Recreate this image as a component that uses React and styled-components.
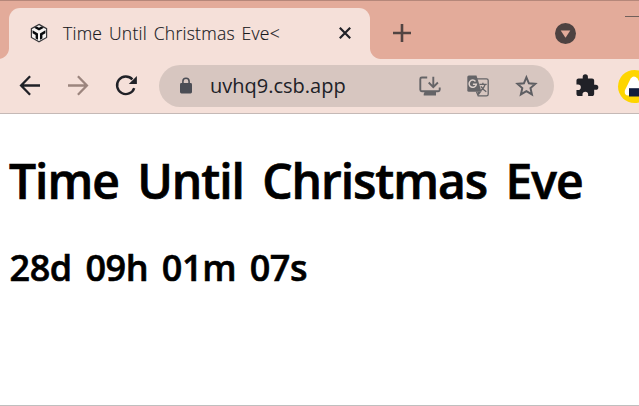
import React from 'react';
import styled, { createGlobalStyle } from 'styled-components';

const GlobalStyle = createGlobalStyle`
  *, *::before, *::after { box-sizing: border-box; }
  body { margin: 0; overflow: hidden; background: #fff; }
  svg { display: block; flex: none; overflow: visible; }
`;

const Window = styled.div`
  display: flex;
  flex-direction: column;
  width: 639px;
  height: 406px;
  overflow: hidden;
  background: #fff;
  border-bottom: 1px solid #bfbfbf;
  font-family: 'Open Sans', 'Noto Sans', 'Noto Sans CJK KR', sans-serif;
`;

const TabStrip = styled.header`
  display: flex;
  align-items: flex-end;
  height: 59px;
  flex: none;
  padding-left: 9px;
  background: #e3ab9a;
  border-top: 1px solid #b5877a;
`;

const Tab = styled.div`
  position: relative;
  display: flex;
  flex: none;
  align-items: center;
  width: 361px;
  height: 51px;
  padding: 0 19px 1px 18px;
  border-radius: 11px 11px 0 0;
  background: #f5e0d9;

  &::before, &::after {
    content: '';
    position: absolute;
    bottom: 0;
    width: 11px;
    height: 11px;
  }
  &::before {
    right: 100%;
    background: radial-gradient(circle at 0 0, transparent 10.5px, #f5e0d9 11.5px);
  }
  &::after {
    left: 100%;
    background: radial-gradient(circle at 100% 0, transparent 10.5px, #f5e0d9 11.5px);
  }
`;

const TabTitle = styled.span`
  flex: 1;
  margin-left: 12px;
  color: #17181c;
  font-size: 17.5px;
  font-weight: 300;
  line-height: 24px;
  white-space: nowrap;
  letter-spacing: 0.25px;
  word-spacing: 2px;
  -webkit-text-stroke: 0.15px #17181c;
`;

const StripControls = styled.div`
  display: flex;
  flex: 1;
  align-items: center;
  height: 51px;
  padding: 0 0 1px 22px;
`;

const TabSearch = styled.div`
  display: flex;
  margin-left: 143px;
`;

const Minimise = styled.div`
  align-self: flex-start;
  flex: none;
  width: 15px;
  height: 1px;
  margin: 8px 0 0 49px;
  background: #71605b;
`;

const Toolbar = styled.nav`
  display: flex;
  align-items: center;
  flex: none;
  height: 55px;
  padding-left: 18px;
  background: #f5e0d9;
  border-bottom: 1px solid #c5b9b6;
`;

const Navigation = styled.div`
  display: flex;
  gap: 24px;
  width: 141px;
  flex: none;
`;

const AddressBar = styled.div`
  display: flex;
  align-items: center;
  flex: none;
  width: 395px;
  height: 42px;
  padding: 0 16px 0 20px;
  border-radius: 21px;
  background: #d7c6c0;
`;

const Address = styled.span`
  flex: 1;
  margin-left: 17px;
  color: #202127;
  font-size: 20px;
  line-height: 28px;
  letter-spacing: 0;
  white-space: nowrap;
`;

const AddressActions = styled.div`
  display: flex;
  gap: 24px;
`;

const Extensions = styled.div`
  display: flex;
  align-items: center;
  flex: none;
  gap: 18px;
  margin-left: 21px;
`;

const Page = styled.main`
  padding: 0 9px;
  color: #000;
`;

const Title = styled.h1`
  margin: 34px 0 0;
  font-size: 48px;
  font-weight: 600;
  line-height: 66px;
  letter-spacing: -1.05px;
  word-spacing: 7px;
  white-space: nowrap;
  -webkit-text-stroke: 0.7px #000;
`;

const Countdown = styled.h2`
  margin: 29px 0 0 0.5px;
  font-size: 36px;
  font-weight: 600;
  line-height: 50px;
  letter-spacing: -0.4px;
  word-spacing: 4.6px;
  white-space: nowrap;
  -webkit-text-stroke: 0.6px #000;
`;

const CubeIcon = () => (
  <svg width="24" height="24" viewBox="0 0 24 24">
    <path d="M12 3.4 19.6 7.6V16.4L12 20.7 4.4 16.4V7.6Z" fill="#f6f3f1" stroke="#38373a" strokeWidth="1.2" />
    <path d="M7.1 6.7 9.8 5.4 12 6.7 14.2 5.4 16.9 6.7 12 9.6Z" fill="#080a0c" />
    <path d="M5.6 9.3 11 12.5V18.8L8.6 17.5V14L5.6 12.2ZM18.4 9.3 13 12.5V18.8L15.4 17.5V14L18.4 12.2Z" fill="#080a0c" />
  </svg>
);

const CloseIcon = () => (
  <svg width="12" height="12" viewBox="0 0 12 12">
    <path d="M.8.8 11.2 11.2M11.2.8.8 11.2" stroke="#202127" strokeWidth="2.2" />
  </svg>
);

const PlusIcon = () => (
  <svg width="20" height="20" viewBox="0 0 20 20">
    <path d="M10 1V19M1 10H19" stroke="#514442" strokeWidth="2.6" />
  </svg>
);

const TabSearchIcon = () => (
  <svg width="21" height="21" viewBox="0 0 21 21">
    <circle cx="10.5" cy="10.5" r="10.5" fill="#4e4241" />
    <path d="M5.7 7.6H15.3L10.5 14.7Z" fill="#e3ab9a" />
  </svg>
);

const ArrowIcon = ({ flip, color }) => (
  <svg width="24" height="24" viewBox="0 0 24 24">
    <g transform={flip ? 'translate(24 0) scale(-1 1)' : undefined} fill="none" stroke={color} strokeWidth="2.3">
      <path d="M22 11.5H3.5M12.1 2.3 3.1 11.5 12.1 20.7" />
    </g>
  </svg>
);

const ReloadIcon = () => (
  <svg width="24" height="24" viewBox="0 0 24 24">
    <path d="M18.4 5.4A8.8 8.8 0 1 0 20.2 14.1" fill="none" stroke="#202127" strokeWidth="2.4" />
    <path d="M22.9 2V10H14.8Z" fill="#202127" />
  </svg>
);

const LockIcon = () => (
  <svg width="14" height="18" viewBox="0 0 14 18">
    <rect x="1" y="6" width="12" height="10.5" rx="1.4" fill="#4b4d55" />
    <path d="M3.9 6.5V4.3A3.1 3.1 0 0 1 10.1 4.3V6.5" fill="none" stroke="#4b4d55" strokeWidth="1.6" />
  </svg>
);

const InstallIcon = () => (
  <svg width="24" height="24" viewBox="0 0 24 24">
    <path d="M9.2 3.5H3.8Q2.3 3.5 2.3 5V15.8Q2.3 17.3 3.8 17.3H20.2Q21.7 17.3 21.7 15.8V13.4" fill="none" stroke="#656467" strokeWidth="1.9" />
    <path d="M6.7 17.4H18V21.4H5.7V19.9Z" fill="#656467" />
    <path d="M15.3 2.8V12.7M10.7 8.5 15.3 13.1 19.9 8.5" fill="none" stroke="#656467" strokeWidth="1.9" />
  </svg>
);

const TranslateIcon = () => (
  <svg width="24" height="24" viewBox="0 0 24 24">
    <path d="M11 4.8H20.4Q22.2 4.8 22.2 6.5V20.3Q22.2 21.9 20.4 21.9H12.2L10.5 17.8" fill="none" stroke="#656467" strokeWidth="1.3" />
    <path d="M2.8 1.4H10.5L15.5 17.7H2.8Q1.3 17.7 1.3 16.2V2.9Q1.3 1.4 2.8 1.4Z" fill="#656467" />
    <path d="M11.5 17.7H15.3L12.4 21.6Z" fill="#656467" />
    <path d="M9.5 7.4A3.6 3.6 0 1 0 10.3 10.3H6.9" fill="none" stroke="#ddd0cb" strokeWidth="1.5" />
    <path d="M13.4 10.4H20.7M16.9 8.8V10.4M19 10.7Q17.8 14.5 14.7 16.6M14.9 12.4Q16.9 15.5 20.3 17.7" fill="none" stroke="#656467" strokeWidth="1.3" />
  </svg>
);

const StarIcon = () => (
  <svg width="24" height="24" viewBox="0 0 24 24">
    <path d="M12 3.4 14.5 9.3 20.9 9.9 16.1 14.1 17.5 20.4 12 17.1 6.5 20.4 7.9 14.1 3.1 9.9 9.5 9.3Z" fill="none" stroke="#5e5e62" strokeWidth="2" transform="translate(.4 0)" />
  </svg>
);

const PuzzleIcon = () => (
  <svg width="25" height="25" viewBox="0 0 24 24">
    <path d="M20.5 11H19V7c0-1.1-.9-2-2-2h-4V3.5a2.5 2.5 0 0 0-5 0V5H4c-1.1 0-2 .9-2 2v3.8h1.5a2.7 2.7 0 0 1 0 5.4H2V20c0 1.1.9 2 2 2h3.8v-1.5a2.7 2.7 0 0 1 5.4 0V22H17c1.1 0 2-.9 2-2v-4h1.5a2.5 2.5 0 0 0 0-5Z" fill="#202127" transform="translate(-.6 -.8)" />
  </svg>
);

const AvatarIcon = () => (
  <svg width="33" height="33" viewBox="0 0 33 33">
    <circle cx="16.5" cy="16.5" r="16.5" fill="#fed500" />
    <path d="M12.7 8.6Q15.8 4.5 19.5 8.6L26 20Q28 25.5 23 25.5H10Q5.8 25.3 7 20Z" fill="#fff" />
    <path d="M11 18.2H23V26.5H11Z" fill="#101b3c" />
  </svg>
);

export default function App() {
  return (
    <>
      <GlobalStyle />
      <Window>
        <TabStrip>
          <Tab>
            <CubeIcon />
            <TabTitle>Time Until Christmas Eve&lt;</TabTitle>
            <CloseIcon />
          </Tab>
          <StripControls>
            <PlusIcon />
            <TabSearch><TabSearchIcon /></TabSearch>
            <Minimise />
          </StripControls>
        </TabStrip>
        <Toolbar>
          <Navigation>
            <ArrowIcon color="#202127" />
            <ArrowIcon flip color="#9c857e" />
            <ReloadIcon />
          </Navigation>
          <AddressBar>
            <LockIcon />
            <Address>uvhq9.csb.app</Address>
            <AddressActions>
              <InstallIcon />
              <TranslateIcon />
              <StarIcon />
            </AddressActions>
          </AddressBar>
          <Extensions>
            <PuzzleIcon />
            <AvatarIcon />
          </Extensions>
        </Toolbar>
        <Page>
          <Title>Time Until Christmas Eve</Title>
          <Countdown>28d 09h 01m 07s</Countdown>
        </Page>
      </Window>
    </>
  );
}
